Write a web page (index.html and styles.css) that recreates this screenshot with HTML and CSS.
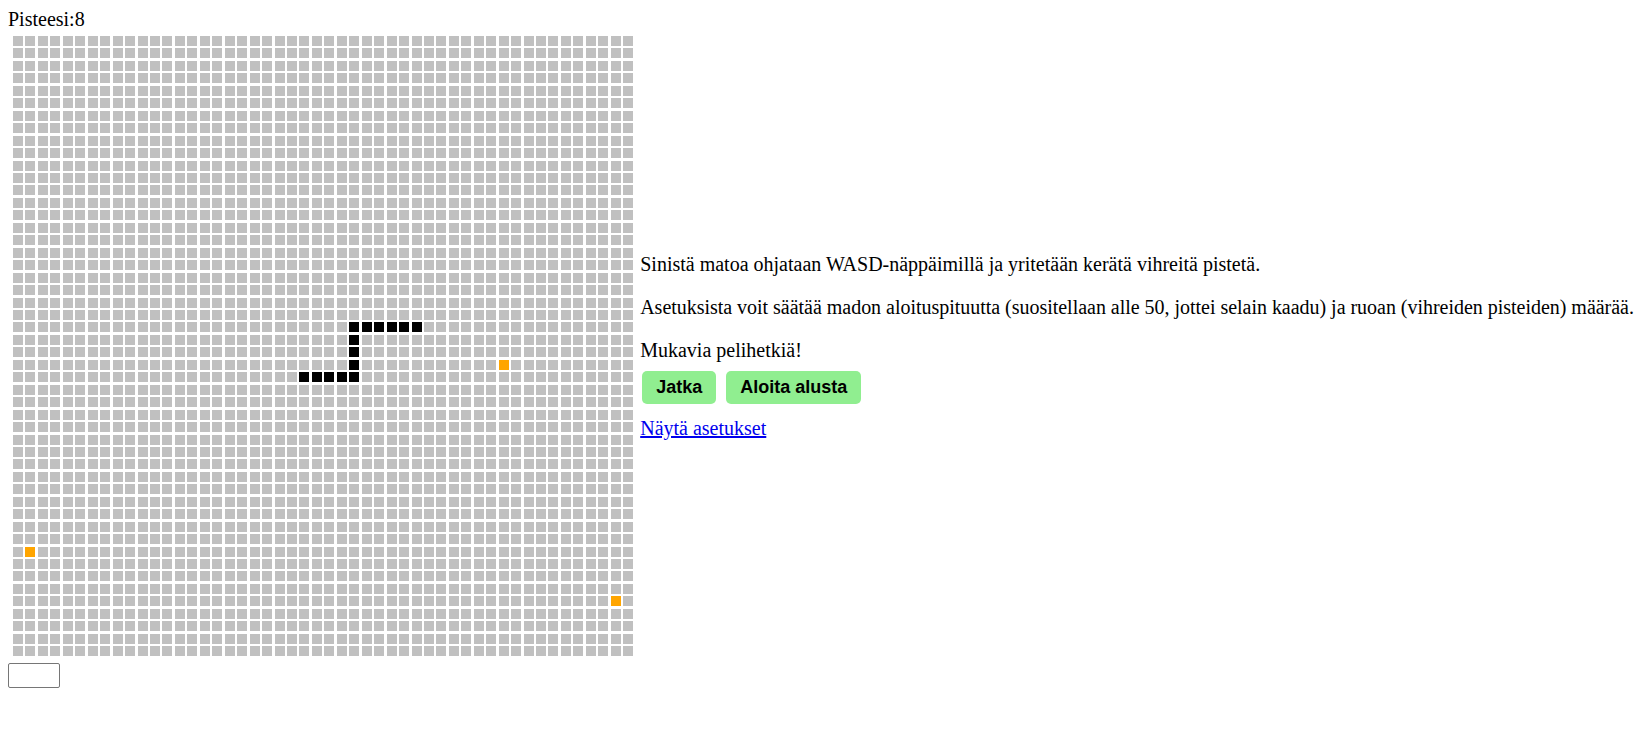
FILE: index.html
```html
<!DOCTYPE html>
<html lang="fi">
<head>
<meta charset="utf-8">
<title>Matopeli</title>
<link rel="stylesheet" href="styles.css">
</head>
<body>
<div class="score">Pisteesi:8</div>
<div class="game">
  <div class="board" id="board"></div>
  <div class="info">
    <p class="para">Sinistä matoa ohjataan WASD-näppäimillä ja yritetään kerätä vihreitä pistetä.</p>
    <p class="para long">Asetuksista voit säätää madon aloituspituutta (suositellaan alle 50, jottei selain kaadu) ja ruoan (vihreiden pisteiden) määrää.</p>
    <p class="para last">Mukavia pelihetkiä!</p>
    <div class="actions">
      <button class="btn" type="button">Jatka</button>
      <button class="btn" type="button">Aloita alusta</button>
    </div>
    <p class="settings"><a href="#" class="link">Näytä asetukset</a></p>
  </div>
</div>
<input class="field" type="text">
<script src="script.js"></script>
</body>
</html>
```

FILE: styles.css
```css
body {
  margin: 8px;
  font-family: "Liberation Serif", "Times New Roman", serif;
  font-size: 20px;
  color: #000;
  background: #fff;
}
.score {
  line-height: 23px;
}
.game {
  display: flex;
  align-items: center;
  gap: 4.5px;
}
.board {
  display: grid;
  grid-template-columns: repeat(50, 10px);
  grid-auto-rows: 10px;
  gap: 2.46px;
  padding: 5px 2.5px 2.5px 5px;
  flex: none;
}
.cell {
  background: #c0c0c0;
}
.cell.snake {
  background: #000;
}
.cell.food {
  background: #ffa500;
}
.info {
  white-space: nowrap;
  line-height: 23px;
  padding-top: 3px;
}
.para {
  margin: 20px 0;
}
.para.long {
  letter-spacing: -0.025px;
}
.para.last {
  margin-bottom: 0;
}
.actions {
  display: flex;
  gap: 10px;
  margin: 9px 0 0 2px;
}
.btn {
  font-family: "Liberation Sans", Arial, sans-serif;
  font-weight: bold;
  font-size: 18px;
  box-sizing: border-box;
  height: 33px;
  line-height: 21px;
  padding: 0 14px;
  background: #90ee90;
  color: #000;
  border: none;
  border-radius: 5px;
}
.settings {
  margin: 13px 0 20px;
}
.link {
  color: #0000ee;
  text-decoration: underline;
}
.field {
  display: block;
  box-sizing: border-box;
  width: 52px;
  height: 25px;
  margin-top: 4px;
  padding: 0 2px;
  border: 1px solid #767676;
  border-radius: 2px;
  background: #fff;
}
```

FILE: script.js
```js
(function () {
  var board = document.getElementById('board');
  var snake = {};
  var i;
  for (i = 27; i <= 32; i++) snake['23,' + i] = 1;
  snake['24,27'] = 1; snake['25,27'] = 1; snake['26,27'] = 1;
  for (i = 23; i <= 27; i++) snake['27,' + i] = 1;
  var food = { '26,39': 1, '41,1': 1, '45,48': 1 };
  var frag = document.createDocumentFragment();
  for (var r = 0; r < 50; r++) {
    for (var c = 0; c < 50; c++) {
      var d = document.createElement('div');
      var k = r + ',' + c;
      d.className = 'cell' + (snake[k] ? ' snake' : food[k] ? ' food' : '');
      frag.appendChild(d);
    }
  }
  board.appendChild(frag);
})();
```
